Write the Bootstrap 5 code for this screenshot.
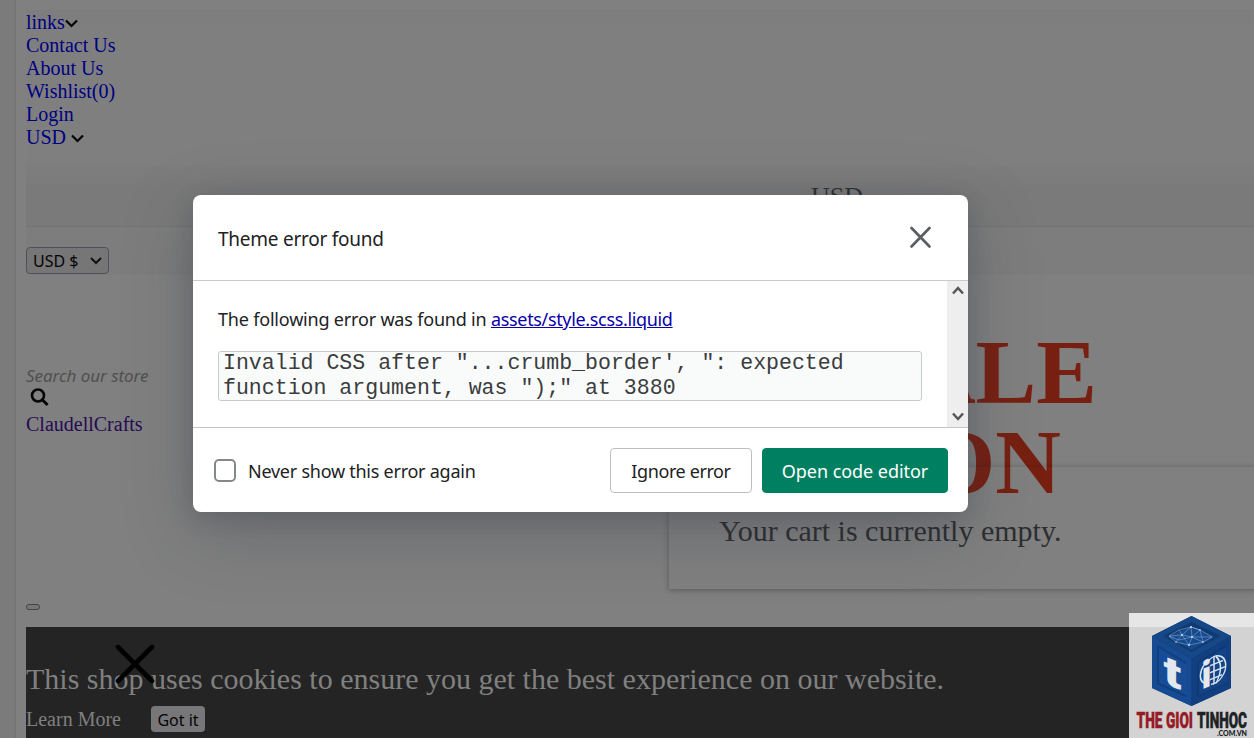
<!DOCTYPE html>
<html lang="en">
<head>
<meta charset="utf-8">
<meta name="viewport" content="width=device-width, initial-scale=1">
<title>ClaudellCrafts</title>
<link rel="stylesheet" href="https://cdn.jsdelivr.net/npm/bootstrap@5.3.0/dist/css/bootstrap.min.css">
<style>
html,body{height:100%;overflow:hidden}
body{background:#7b7b7b;font-family:"Liberation Serif",serif;font-size:20px;line-height:23px;color:#111}
.page{margin-left:15px;height:738px;background:#808080;border-left:1px solid #737373;padding:10px 0 0 10px}
.topbar{height:155px;padding-top:1px;background:linear-gradient(#7d7d7d,#7f7f7f 20px)}
.topbar a{color:#000080;text-decoration:none}
.topbar svg{display:inline-block;vertical-align:1px}
.currency{height:62px;background:linear-gradient(#7d7d7d,#7a7a7a 25px);border-bottom:1px solid #747474;padding:17px 0 0 785px;font-size:26px;line-height:30px;color:#2e3133}
.switcher{height:48px;background:#7d7d7d;padding-top:20px}
.money{width:83px;height:27px;border:1px solid #50505a;border-radius:4px;background:#767677;font:16px/25px "Noto Sans",sans-serif;color:#050505;padding:1px 6px 0}
.search{margin-top:89px;font:italic 17px/23px "Noto Sans",sans-serif;color:#505050;letter-spacing:-.05px}
.glass{display:block;margin:1px 0 0 4px}
.brand{color:#260a52;text-decoration:none;line-height:24px;margin-top:5px}
.pill{width:14px;height:6px;border:1px solid #444;border-radius:3px;background:#777;margin-top:168px}
.cookie{background:#242424;color:#808080;height:111px;margin-top:17px;padding-top:34px}
.cookie p{font-size:30px;line-height:36px;margin:0 0 9px}
.cookie button{border:0;border-radius:4px;width:54px;height:26px;background:#77777a;color:#050505;font:16px/26px "Noto Sans",sans-serif;letter-spacing:0;padding:1px 0 0}
.learn{width:125px;padding-top:1px}
.cookie-x{left:115px;top:644px}
.promo{left:848px;top:328px;width:249px;font-size:91px;line-height:90px;font-weight:700;color:#772011;margin:0;text-align:right}
.promo span{display:block;margin-right:36px}
.cart{left:669px;top:467px;width:600px;height:122px;box-shadow:0 1px 6px rgba(0,0,0,.3);padding:46px 0 0 50px;font-size:30px;line-height:36px;color:#2d2e30}
.dialog{left:193px;top:195px;width:775px;height:317px;background:#fff;border-radius:8px;box-shadow:0 5px 22px rgba(45,48,60,.2),0 20px 70px rgba(45,52,65,.3);font-family:"Noto Sans",sans-serif;font-size:18px;color:#202223}
.dialog-head{height:86px;border-bottom:1px solid #c8cacb;padding:0 36px 0 25px}
.dialog-head h2{font-size:19px;line-height:28px;margin:3px 0 0;font-weight:400;letter-spacing:-.25px}
.dialog-main{height:146px}
.dialog-copy{padding:25px 25px 0}
.dialog-copy p{margin:0;line-height:27px;letter-spacing:-.19px}
.dialog-copy a{color:#0a00a8;letter-spacing:-.34px}
.snippet{margin-top:18px;height:50px;border:1px solid #c5cbc9;border-radius:3px;background:#f9fbfa;font:21.55px/25px "Liberation Mono",monospace;color:#3a3c3e;padding:0 4px;white-space:nowrap}
.snippet div{margin-top:-1px}
.rail{width:21px;background:#eee;padding:5px 0 6px}
.dialog-foot{height:85px;border-top:1px solid #c3c5c7;padding:0 20px 0 21px}
.tick{width:22px;height:23px;border:2px solid #85888b;border-radius:5px}
.never{letter-spacing:-.25px;padding-top:2px}
.act{height:45px;border:1px solid #bcc0c3;border-radius:4px;background:#fff;color:#202223;font-size:18px;padding:2px 0 0;width:142px;letter-spacing:-.4px}
.go{background:#008060;border-color:#008060;color:#fff;width:186px;margin-left:10px;letter-spacing:-.05px}
.stamp{left:1129px;top:613px;width:125px;height:125px;background:rgba(255,255,255,.8)}
.stamp svg{display:block}
</style>
<script src="https://cdn.jsdelivr.net/npm/bootstrap@5.3.0/dist/js/bootstrap.bundle.min.js"></script>
</head>
<body class="position-relative">
<main class="page">
  <nav class="topbar d-flex flex-column">
    <div><a href="#">links</a><svg width="13" height="9" viewBox="0 0 13 9" fill="none" stroke="#050505" stroke-width="2.2"><path d="m1 1.500 5.500 5.500L12 1.500"/></svg></div>
    <a href="#">Contact Us</a>
    <a href="#">About Us</a>
    <a href="#">Wishlist(0)</a>
    <a href="#">Login</a>
    <div><a href="#">USD</a> <svg width="13" height="9" viewBox="0 0 13 9" fill="none" stroke="#050505" stroke-width="2.2"><path d="m1 1.500 5.500 5.500L12 1.500"/></svg></div>
  </nav>
  <div class="currency">USD</div>
  <div class="switcher"><div class="money d-flex align-items-center justify-content-between"><span>USD $</span><svg width="12" height="8" viewBox="0 0 12 8" fill="none" stroke="#111" stroke-width="2"><path d="m1 1 5 5 5-5"/></svg></div></div>
  <div class="search">Search our store</div>
  <svg class="glass" width="20" height="19" viewBox="0 0 20 19" fill="none" stroke="#050505"><circle cx="8" cy="7.500" r="6" stroke-width="2.600"/><path d="m12 11.500 5.600 5.500" stroke-width="3"/></svg>
  <a href="#" class="brand d-block">ClaudellCrafts</a>
  <div class="pill"></div>
  <section class="cookie">
    <p>This shop uses cookies to ensure you get the best experience on our website.</p>
    <div class="d-flex align-items-center"><span class="learn">Learn More</span><button type="button">Got it</button></div>
  </section>
</main>
<svg class="cookie-x position-absolute" width="40" height="40" viewBox="0 0 40 40" stroke="#020202" stroke-width="4.600" stroke-linecap="round"><path d="m3 3 34 34M37 3 3 37"/></svg>
<h1 class="promo position-absolute">SALE<span>ON</span></h1>
<aside class="cart position-absolute">Your cart is currently empty.</aside>

<div class="dialog position-absolute d-flex flex-column" role="dialog">
  <header class="dialog-head d-flex align-items-center justify-content-between">
    <h2>Theme error found</h2>
    <svg width="23" height="23" viewBox="0 0 23 23" stroke="#5c5f62" stroke-width="2.700" stroke-linecap="round"><path d="m2.500 2 18 18.500M20.500 2l-18 18.500"/></svg>
  </header>
  <div class="dialog-main d-flex">
    <div class="dialog-copy flex-grow-1">
      <p>The following error was found in <a href="#">assets/style.scss.liquid</a></p>
      <div class="snippet"><div>Invalid CSS after "...crumb_border', ": expected<br>function argument, was ");" at 3880</div></div>
    </div>
    <div class="rail d-flex flex-column justify-content-between align-items-center">
      <svg width="12" height="9" viewBox="0 0 12 9" fill="none" stroke="#555" stroke-width="2.500"><path d="m1 7.500 5-5.500 5 5.500"/></svg>
      <svg width="12" height="9" viewBox="0 0 12 9" fill="none" stroke="#555" stroke-width="2.500"><path d="m1 1.500 5 5.500 5-5.500"/></svg>
    </div>
  </div>
  <footer class="dialog-foot d-flex align-items-center">
    <span class="tick me-2"></span><span class="never ms-1">Never show this error again</span>
    <button type="button" class="act ms-auto">Ignore error</button>
    <button type="button" class="act go">Open code editor</button>
  </footer>
</div>

<div class="stamp position-absolute">
<svg width="125" height="125" viewBox="0 0 125 125">
  <path d="M62.500 3 102 23v52L62.500 93 23 75V23z" fill="#123c7c"/>
  <path d="M62.500 3 102 23 62.500 46 23 23z" fill="#164786"/>
  <path d="M62.500 9 92 23 62.500 39 34 23z" fill="#103a72"/>
  <path d="M62.500 13 86 24 62.500 37 39 24z" fill="#174a8c"/>
  <path d="M23 23l39.500 23v47L23 75z" fill="#164a92"/>
  <path d="M28 32l29 17v35L28 71z" fill="#113e7c"/>
  <path d="M30 35l27 16v31L30 70z" fill="#174c97"/>
  <path d="M102 23 62.500 46v47L102 75z" fill="#123f80"/>
  <path d="M97 32 68 49v35l29-13z" fill="#0f3972"/>
  <path d="M97 34 70 50v32l27-12z" fill="#144388"/>
  <g fill="none" stroke="#8fb4dc" stroke-width=".5">
    <path d="m40 23 10-6 12-3 9 3 12 7-9 5-14 3-13-3zM40 23l13-1 9-8 1 10-13 3zM53 22l-3-5M53 22l10 2 8-7 3 12-11-5-3 8M63 24l20 0M47 29l6-7 7 10M71 17l-9-3"/>
  </g>
  <g fill="#dcebfa"><circle cx="53" cy="22" r=".9"/><circle cx="63" cy="24" r=".9"/><circle cx="62" cy="14" r=".9"/><circle cx="71" cy="17" r=".8"/><circle cx="74" cy="29" r=".8"/><circle cx="60" cy="32" r=".9"/><circle cx="47" cy="29" r=".7"/></g>
  <g fill="none" stroke="#d8e4f0" stroke-width="1.500" transform="translate(84 57.500) skewY(-22)">
    <path d="M-4-12A11.500 13.500 0 1 1-2 13M-9-9A13 13 0 0 0-9 9"/>
    <path d="M1-13v27M3-13q9 13 0 27M-3-6H10M-3 1H12M-3 8H9"/>
  </g>
  <text transform="translate(34.500 70) skewY(22)" font-family="Roboto,sans-serif" font-weight="900" font-size="41" textLength="18" lengthAdjust="spacingAndGlyphs" fill="#e2e8ee">t</text>
  <text transform="translate(72.500 76.500) skewY(-22)" font-family="Roboto,sans-serif" font-weight="900" font-size="38" textLength="10" lengthAdjust="spacingAndGlyphs" fill="#e2e8ee">i</text>
  <text transform="translate(7.500 115) scale(.6 1)" font-family="Roboto,sans-serif" font-weight="900" font-size="22" textLength="94.200" lengthAdjust="spacingAndGlyphs" fill="#951b24" stroke="#951b24" stroke-width=".5">THE GIOI</text>
  <text transform="translate(68 115) scale(.6 1)" font-family="Roboto,sans-serif" font-weight="900" font-size="22" textLength="83.300" lengthAdjust="spacingAndGlyphs" fill="#1c2226" stroke="#1c2226" stroke-width=".5">TINHOC</text>
  <text x="88" y="123" font-family="Lato,sans-serif" font-weight="900" font-size="6.800" textLength="30" lengthAdjust="spacingAndGlyphs" fill="#15191c">.COM.VN</text>
</svg>
</div>
</body>
</html>
